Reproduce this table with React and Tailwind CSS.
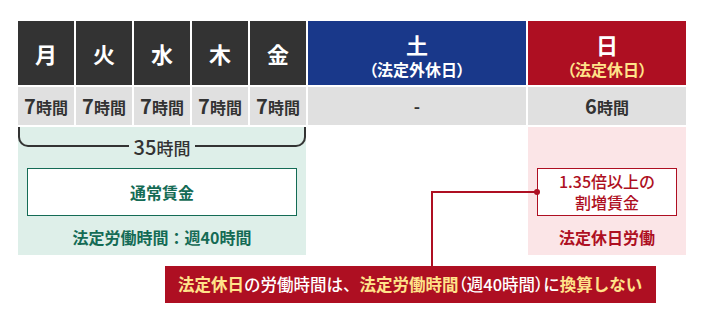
const weekdays = ["月", "火", "水", "木", "金"];

const Hours = ({ n }) => (
  <span className="font-bold text-[#333333] leading-none">
    <span className="text-[20px]">{n}</span>
    <span className="text-[16px]">時間</span>
  </span>
);

export default function App() {
  return (
    <div
      className="relative w-[704px] h-[326px] bg-white pl-[18px] pt-[21px]"
      style={{ fontFamily: '"Noto Sans CJK JP", "Noto Sans", sans-serif' }}
    >
      <div className="grid grid-cols-[56px_56px_56px_56px_56px_218px_158px] gap-[2px] w-[668px]">
        {/* header row */}
        {weekdays.map((d) => (
          <div
            key={d}
            className="h-[64px] bg-[#333333] flex items-center justify-center text-white text-[22px] font-bold"
          >
            {d}
          </div>
        ))}
        <div className="h-[64px] pt-[4px] bg-[#19388a] flex flex-col items-center justify-center text-white font-bold">
          <span className="text-[22px] leading-[24px]">土</span>
          <span className="text-[16px] leading-[20px] mt-[3px] [font-feature-settings:'palt']">（法定外休日）</span>
        </div>
        <div className="h-[64px] pt-[4px] bg-[#ae0f22] flex flex-col items-center justify-center font-bold">
          <span className="text-[22px] leading-[24px] text-white">日</span>
          <span className="text-[16px] leading-[20px] mt-[3px] text-[#ffe38a] [font-feature-settings:'palt']">（法定休日）</span>
        </div>

        {/* hours row */}
        {weekdays.map((d) => (
          <div
            key={d + "h"}
            className="h-[38px] bg-[#e0e0e0] flex items-center justify-center"
          >
            <Hours n="7" />
          </div>
        ))}
        <div className="h-[38px] bg-[#e0e0e0] flex items-center justify-center text-[#333333] font-bold text-[17px]">
          -
        </div>
        <div className="h-[38px] bg-[#e0e0e0] flex items-center justify-center">
          <Hours n="6" />
        </div>

        {/* weekday summary */}
        <div className="col-span-5 h-[128px] bg-[#deefe9] flex flex-col">
          <div className="flex items-start h-[30px]">
            <div className="flex-1 h-[20px] border-l-2 border-b-2 border-[#333333] rounded-bl-[10px]"></div>
            <div className="px-[5px] mt-[9px] leading-[22px] text-[#333333] font-medium">
              <span className="text-[20px]">35</span>
              <span className="text-[17px]">時間</span>
            </div>
            <div className="flex-1 h-[20px] border-r-2 border-b-2 border-[#333333] rounded-br-[10px]"></div>
          </div>
          <div className="mx-[9px] mt-[11px] h-[48px] bg-white border border-[#146b55] flex items-center justify-center text-[#146b55] font-bold text-[16px]">
            通常賃金
          </div>
          <div className="mt-[9px] leading-[24px] text-center text-[#146b55] font-bold text-[16px]">
            法定労働時間：週40時間
          </div>
        </div>
        <div></div>
        <div className="h-[128px] bg-[#fbe5e7] flex flex-col">
          <div className="mx-[9px] mt-[41px] h-[48px] bg-white border border-[#ae0f22] flex flex-col items-center justify-center text-[#ae0f22] text-[16px] font-medium leading-[21px]">
            <span>1.35倍以上の</span>
            <span>割増賃金</span>
          </div>
          <div className="mt-[9px] leading-[24px] text-center text-[#ae0f22] font-bold text-[16px]">
            法定休日労働
          </div>
        </div>
      </div>

      {/* connector line */}
      <div className="absolute left-[431px] top-[191px] w-[106px] h-[75px] border-l-2 border-t-2 border-[#ae0f22]"></div>
      <div className="absolute left-[534px] top-[189px] w-[6px] h-[6px] rounded-full bg-[#ae0f22]"></div>

      {/* banner */}
      <div className="ml-[147px] mt-[11px] w-[491px] h-[37px] bg-[#ae0f22] flex items-center pl-[13px] text-[16.5px] font-bold whitespace-nowrap">
        <span className="text-[#ffe38a]">法定休日</span>
        <span className="text-white font-medium">の労働時間は、</span>
        <span className="text-[#ffe38a]">法定労働時間</span>
        <span className="text-white font-medium [font-feature-settings:'palt']">（</span>
        <span className="text-white font-medium">週40時間</span>
        <span className="text-white font-medium [font-feature-settings:'palt']">）</span>
        <span className="text-white font-medium">に</span>
        <span className="text-[#ffe38a]">換算しない</span>
      </div>
    </div>
  );
}
